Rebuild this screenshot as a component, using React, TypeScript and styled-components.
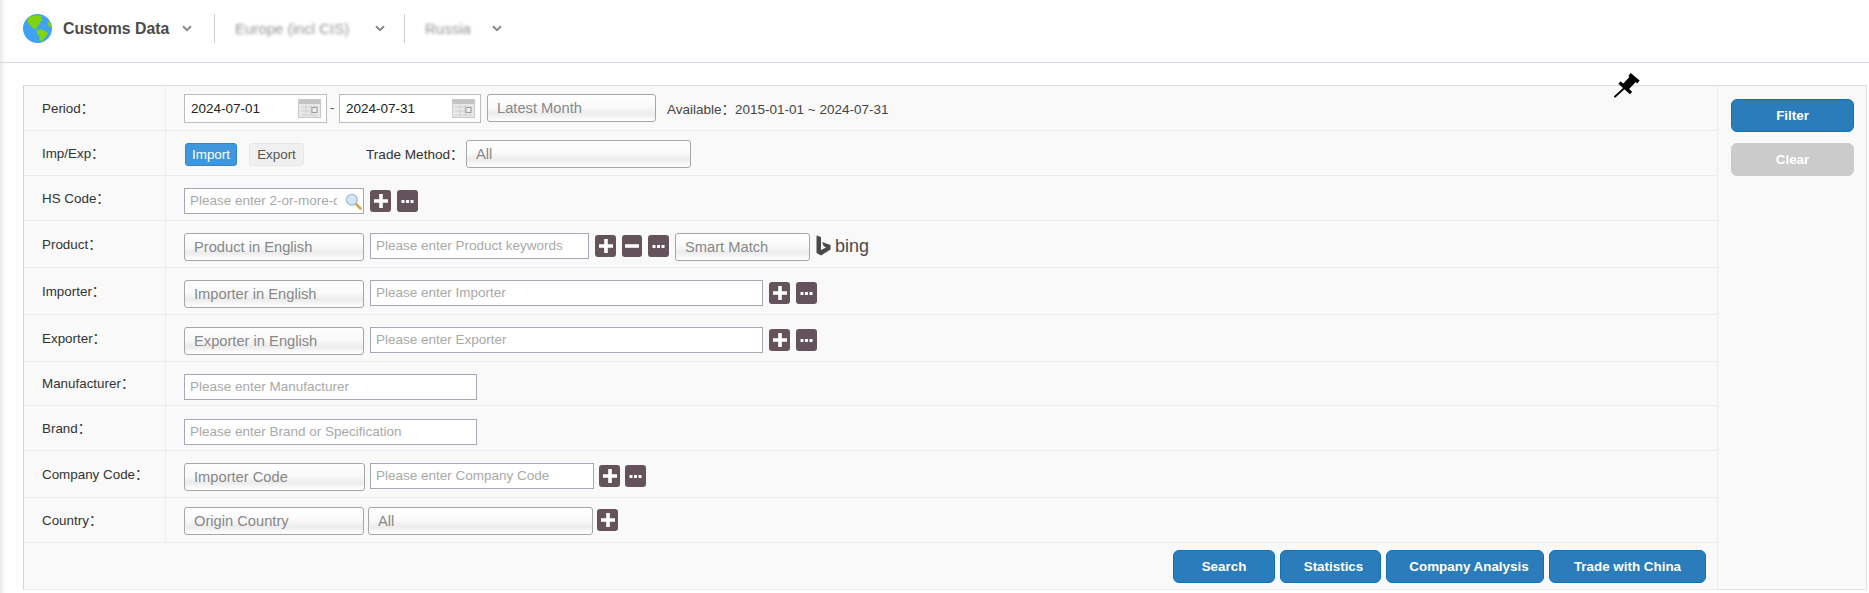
import React from 'react';
import styled, { createGlobalStyle } from 'styled-components';

const GlobalStyle = createGlobalStyle`
  html, body {
    margin: 0;
    padding: 0;
    background: #fff;
  }
  * {
    box-sizing: border-box;
  }
  body {
    font-family: "Liberation Sans", Arial, "Noto Sans CJK SC", sans-serif;
    font-size: 13.4px;
    color: #333;
  }
`;

const Page = styled.div`
  position: relative;
  width: 1869px;
  height: 593px;
  overflow: hidden;
  background: linear-gradient(to right, #e6e7ee, #f6f6f8 3px, #fff 6px);
`;

const Header = styled.header`
  display: flex;
  align-items: center;
  height: 63px;
  padding: 0 0 5px 23px;
  border-bottom: 1px solid #d6d8e4;
`;

const Crumb = styled.div<{ $width: number }>`
  display: flex;
  align-items: center;
  height: 29px;
  width: ${(p) => p.$width}px;
`;

const CrumbText = styled.span<{ $blur?: boolean; $width?: number }>`
  font-size: ${(p) => (p.$blur ? 15 : 15.8)}px;
  font-weight: ${(p) => (p.$blur ? 400 : 700)};
  color: #4a4a4a;
  white-space: nowrap;
  width: ${(p) => (p.$width ? `${p.$width}px` : 'auto')};
  filter: ${(p) => (p.$blur ? 'blur(1.7px)' : 'none')};
  opacity: ${(p) => (p.$blur ? 0.6 : 1)};
`;

const CrumbDivider = styled.div`
  width: 1px;
  height: 29px;
  background: #cfcfd6;
  margin-right: 20px;
`;

const Chevron = styled.svg`
  width: 10px;
  height: 7px;
  flex: none;
`;

const Panel = styled.section`
  display: flex;
  height: 505px;
  margin: 22px 2px 0 23px;
  background: #f9f9f9;
  border: 1px solid #e2e2e2;
  border-top-color: #dcdcdc;
  border-left-color: #d4d4d4;
`;

const Main = styled.div`
  width: 1694px;
  flex: none;
  border-right: 1px solid #ececec;
`;

const Side = styled.aside`
  display: flex;
  flex-direction: column;
  gap: 11px;
  flex: 1;
  padding: 13px 0 0 13px;
`;

const Row = styled.div<{ $height: number }>`
  display: flex;
  height: ${(p) => p.$height}px;
  border-bottom: 1px solid #ececec;
`;

const Label = styled.div`
  display: flex;
  align-items: center;
  width: 142px;
  flex: none;
  padding: 0 0 3px 18px;
  border-right: 1px solid #efefef;
  color: #333;
`;

const Content = styled.div<{ $top: number; $gap?: number }>`
  display: flex;
  align-items: flex-start;
  flex: 1;
  gap: ${(p) => p.$gap ?? 6}px;
  padding: ${(p) => p.$top}px 0 0 18px;
`;

const TextInput = styled.input<{ $width: number }>`
  width: ${(p) => p.$width}px;
  height: 26px;
  flex: none;
  padding: 0 4px 2px 5px;
  border: 1px solid #a8a8b4;
  border-radius: 0;
  background: #fff;
  font-family: inherit;
  font-size: 13.5px;
  outline: none;

  &::placeholder {
    color: #a9a9a9;
    opacity: 1;
  }
`;

const SearchField = styled.div`
  position: relative;
  width: 180px;
  height: 26px;
  flex: none;

  input {
    width: 100%;
    padding-right: 26px;
  }

  svg {
    position: absolute;
    right: 2px;
    top: 5px;
  }
`;

const DateField = styled.div<{ $width: number }>`
  display: flex;
  align-items: center;
  justify-content: space-between;
  width: ${(p) => p.$width}px;
  height: 29px;
  flex: none;
  padding: 0 5px 1px 6px;
  border: 1px solid #bcbcbc;
  background: #fff;
  font-size: 13.5px;
  color: #222;
`;

const DateDash = styled.span`
  width: 6px;
  margin-top: 6px;
  color: #555;
`;

const Select = styled.div<{ $width: number; $offset?: number }>`
  display: flex;
  align-items: center;
  width: ${(p) => p.$width}px;
  height: 28px;
  flex: none;
  margin-left: ${(p) => p.$offset ?? 0}px;
  padding: 0 0 0 9px;
  border: 1px solid #a6a6a6;
  border-radius: 3px;
  background: linear-gradient(#fff 0%, #fafafa 45%, #ececec 72%, #f6f6f6 86%, #fff 100%);
  font-size: 14.7px;
  color: #888;
  white-space: nowrap;
`;

const ToggleButton = styled.button<{ $active?: boolean; $offset?: number; $width: number }>`
  width: ${(p) => p.$width}px;
  height: 23px;
  margin: 3px 0 0 ${(p) => p.$offset ?? 0}px;
  padding: 0;
  border: 1px solid ${(p) => (p.$active ? '#2e86cf' : '#e8e8e8')};
  border-radius: 3px;
  background: ${(p) => (p.$active ? '#3f98de' : '#f0f0f0')};
  color: ${(p) => (p.$active ? '#fff' : '#555')};
  font-family: inherit;
  font-size: 13.4px;
`;

const InlineLabel = styled.span<{ $offset: number }>`
  width: 88px;
  flex: none;
  margin: 3px 0 0 ${(p) => p.$offset}px;
  white-space: nowrap;
  font-size: 13.6px;
`;

const AvailableText = styled.span`
  margin: 4px 0 0 8px;
  font-size: 13.5px;
  color: #444;
  white-space: nowrap;
`;

const IconButton = styled.button<{ $width?: number }>`
  display: flex;
  align-items: center;
  justify-content: center;
  width: ${(p) => p.$width ?? 21}px;
  height: 22px;
  flex: none;
  margin-top: 2px;
  padding: 0;
  border: 0;
  border-radius: 3px;
  background: #65535c;
`;

const BingMark = styled.div`
  display: flex;
  align-items: center;
  gap: 4px;
  margin-top: 2px;
  font-size: 18px;
  color: #4a4a4a;
`;

const ActionRow = styled.div`
  display: flex;
  justify-content: flex-end;
  gap: 5px;
  height: 47px;
  padding: 7px 11px 0 0;
  border-bottom: 1px solid #ececec;
`;

const ActionButton = styled.button<{ $width: number; $muted?: boolean; $shift?: number }>`
  width: ${(p) => p.$width}px;
  height: 33px;
  padding: 0 0 1px ${(p) => p.$shift ?? 0}px;
  border: 1px solid ${(p) => (p.$muted ? '#cbcbcb' : '#0e72b5')};
  border-radius: 6px;
  background: ${(p) => (p.$muted ? '#cbcbcb' : '#2a7cba')};
  color: #fff;
  font-family: inherit;
  font-size: 13.4px;
  font-weight: 700;
`;

const PinMark = styled.svg`
  position: absolute;
  left: 1614px;
  top: 73px;
  width: 27px;
  height: 25px;
`;

const ChevronDown = () => (
  <Chevron viewBox="0 0 10 7">
    <path d="M1 1.2 L5 5.2 L9 1.2" fill="none" stroke="#8a8a8a" strokeWidth="2" />
  </Chevron>
);

const Globe = () => (
  <svg width="29" height="29" viewBox="0 0 29 29" style={{ marginRight: 11, flex: 'none' }}>
    <circle cx="14.5" cy="14.5" r="14.5" fill="#3ea2f5" />
    <path
      d="M5 4 C8 1.5 14 0.5 19 2 L18 4.5 L20 6.5 L17 8 L16 11 L13.5 13 L13.5 16 L10 14 L7.5 11.5 L5.5 10 L4.5 6.5 Z"
      fill="#7fd30f"
    />
    <path
      d="M13.5 16.5 L17 15 L21 16.5 L25 18.5 L24 21.5 L21 24 L19 27.5 L16.5 26.5 L16.5 22.5 L14 20 Z"
      fill="#7fd30f"
    />
    <path d="M25 6.5 L27.5 10 L28.5 14 L26 12.5 L24.5 10 Z" fill="#7fd30f" />
  </svg>
);

const CalendarIcon = () => (
  <svg width="23" height="19" viewBox="0 0 23 19" style={{ flex: 'none' }}>
    <rect x="0.5" y="0.5" width="22" height="18" fill="#e8e8e8" stroke="#c9c9c9" />
    <rect x="1" y="1" width="21" height="4" fill="#c4c4c4" />
    <path d="M3 8 H20 M3 12 H20 M3 16 H20 M8 6 V17 M13 6 V17" stroke="#cfcfcf" fill="none" />
    <rect x="14" y="8.5" width="5" height="5" fill="#eee" stroke="#9a9a9a" />
  </svg>
);

const MagnifierIcon = () => (
  <svg width="17" height="17" viewBox="0 0 17 17">
    <line x1="10.5" y1="10.5" x2="15.5" y2="15.5" stroke="#d9a648" strokeWidth="2.6" strokeLinecap="round" />
    <circle cx="6.8" cy="6.8" r="5.4" fill="#d3e6f8" stroke="#a5bfd8" strokeWidth="1.4" />
  </svg>
);

const PlusIcon = () => (
  <svg width="16" height="16" viewBox="0 0 16 16">
    <path d="M8 1 V15 M1 8 H15" stroke="#fff" strokeWidth="3.6" fill="none" />
  </svg>
);

const MinusIcon = () => (
  <svg width="16" height="16" viewBox="0 0 16 16">
    <path d="M1 8 H15" stroke="#fff" strokeWidth="3.6" fill="none" />
  </svg>
);

const DotsIcon = () => (
  <svg width="13" height="5" viewBox="0 0 13 5">
    <rect x="0.5" y="1" width="3" height="3" fill="#fff" />
    <rect x="5" y="1" width="3" height="3" fill="#fff" />
    <rect x="9.5" y="1" width="3" height="3" fill="#fff" />
  </svg>
);

const BingLogo = () => (
  <svg width="15" height="22" viewBox="0 0 15 22">
    <path d="M0.5 0.5 L5 2 V15 L10 12.4 L7.6 11 L6 7 L14.5 10 V14.5 L5 20.5 L0.5 18 Z" fill="#4a4a4a" />
  </svg>
);

const Pin = () => (
  <PinMark viewBox="0 0 27 25">
    <path d="M15.5 1.5 L24.5 9" stroke="#000" strokeWidth="3.6" fill="none" />
    <path d="M19 6 L11.5 14" stroke="#000" strokeWidth="8" fill="none" />
    <path d="M5.5 9.5 L17 20" stroke="#000" strokeWidth="3.4" fill="none" />
    <path d="M11 14.5 L0.5 24" stroke="#000" strokeWidth="1.9" fill="none" />
  </PinMark>
);

export default function App() {
  return (
    <Page>
      <GlobalStyle />
      <Header>
        <Crumb $width={191}>
          <Globe />
          <CrumbText $width={119}>Customs Data</CrumbText>
          <ChevronDown />
        </Crumb>
        <CrumbDivider />
        <Crumb $width={169}>
          <CrumbText $blur $width={140}>Europe (incl CIS)</CrumbText>
          <ChevronDown />
        </Crumb>
        <CrumbDivider />
        <Crumb $width={90}>
          <CrumbText $blur $width={67}>Russia</CrumbText>
          <ChevronDown />
        </Crumb>
      </Header>

      <Pin />

      <Panel>
        <Main>
          <Row $height={45}>
            <Label>Period：</Label>
            <Content $top={8} $gap={3}>
              <DateField $width={143}>
                2024-07-01
                <CalendarIcon />
              </DateField>
              <DateDash>-</DateDash>
              <DateField $width={142}>
                2024-07-31
                <CalendarIcon />
              </DateField>
              <Select $width={169} $offset={3}>Latest Month</Select>
              <AvailableText>Available：2015-01-01 ~ 2024-07-31</AvailableText>
            </Content>
          </Row>
          <Row $height={45}>
            <Label>Imp/Exp：</Label>
            <Content $top={9} $gap={12}>
              <ToggleButton $active $offset={1} $width={52}>Import</ToggleButton>
              <ToggleButton $width={55}>Export</ToggleButton>
              <InlineLabel $offset={50}>Trade Method：</InlineLabel>
              <Select $width={225}>All</Select>
            </Content>
          </Row>
          <Row $height={45}>
            <Label>HS Code：</Label>
            <Content $top={12}>
              <SearchField>
                <TextInput $width={180} placeholder="Please enter 2-or-more-digit HS Code" />
                <MagnifierIcon />
              </SearchField>
              <IconButton><PlusIcon /></IconButton>
              <IconButton><DotsIcon /></IconButton>
            </Content>
          </Row>
          <Row $height={47}>
            <Label>Product：</Label>
            <Content $top={12}>
              <Select $width={180}>Product in English</Select>
              <TextInput $width={219} placeholder="Please enter Product keywords" />
              <IconButton><PlusIcon /></IconButton>
              <IconButton $width={20}><MinusIcon /></IconButton>
              <IconButton><DotsIcon /></IconButton>
              <Select $width={135}>Smart Match</Select>
              <BingMark>
                <BingLogo />
                bing
              </BingMark>
            </Content>
          </Row>
          <Row $height={47}>
            <Label>Importer：</Label>
            <Content $top={12}>
              <Select $width={180}>Importer in English</Select>
              <TextInput $width={393} placeholder="Please enter Importer" />
              <IconButton><PlusIcon /></IconButton>
              <IconButton><DotsIcon /></IconButton>
            </Content>
          </Row>
          <Row $height={47}>
            <Label>Exporter：</Label>
            <Content $top={12}>
              <Select $width={180}>Exporter in English</Select>
              <TextInput $width={393} placeholder="Please enter Exporter" />
              <IconButton><PlusIcon /></IconButton>
              <IconButton><DotsIcon /></IconButton>
            </Content>
          </Row>
          <Row $height={44}>
            <Label>Manufacturer：</Label>
            <Content $top={12}>
              <TextInput $width={293} placeholder="Please enter Manufacturer" />
            </Content>
          </Row>
          <Row $height={45}>
            <Label>Brand：</Label>
            <Content $top={13}>
              <TextInput $width={293} placeholder="Please enter Brand or Specification" />
            </Content>
          </Row>
          <Row $height={47}>
            <Label>Company Code：</Label>
            <Content $top={12} $gap={5}>
              <Select $width={181}>Importer Code</Select>
              <TextInput $width={224} placeholder="Please enter Company Code" />
              <IconButton><PlusIcon /></IconButton>
              <IconButton><DotsIcon /></IconButton>
            </Content>
          </Row>
          <Row $height={45}>
            <Label>Country：</Label>
            <Content $top={9} $gap={4}>
              <Select $width={180}>Origin Country</Select>
              <Select $width={225}>All</Select>
              <IconButton><PlusIcon /></IconButton>
            </Content>
          </Row>
          <ActionRow>
            <ActionButton $width={102}>Search</ActionButton>
            <ActionButton $width={101} $shift={6}>Statistics</ActionButton>
            <ActionButton $width={158} $shift={8}>Company Analysis</ActionButton>
            <ActionButton $width={157}>Trade with China</ActionButton>
          </ActionRow>
        </Main>
        <Side>
          <ActionButton $width={123}>Filter</ActionButton>
          <ActionButton $width={123} $muted>Clear</ActionButton>
        </Side>
      </Panel>
    </Page>
  );
}
